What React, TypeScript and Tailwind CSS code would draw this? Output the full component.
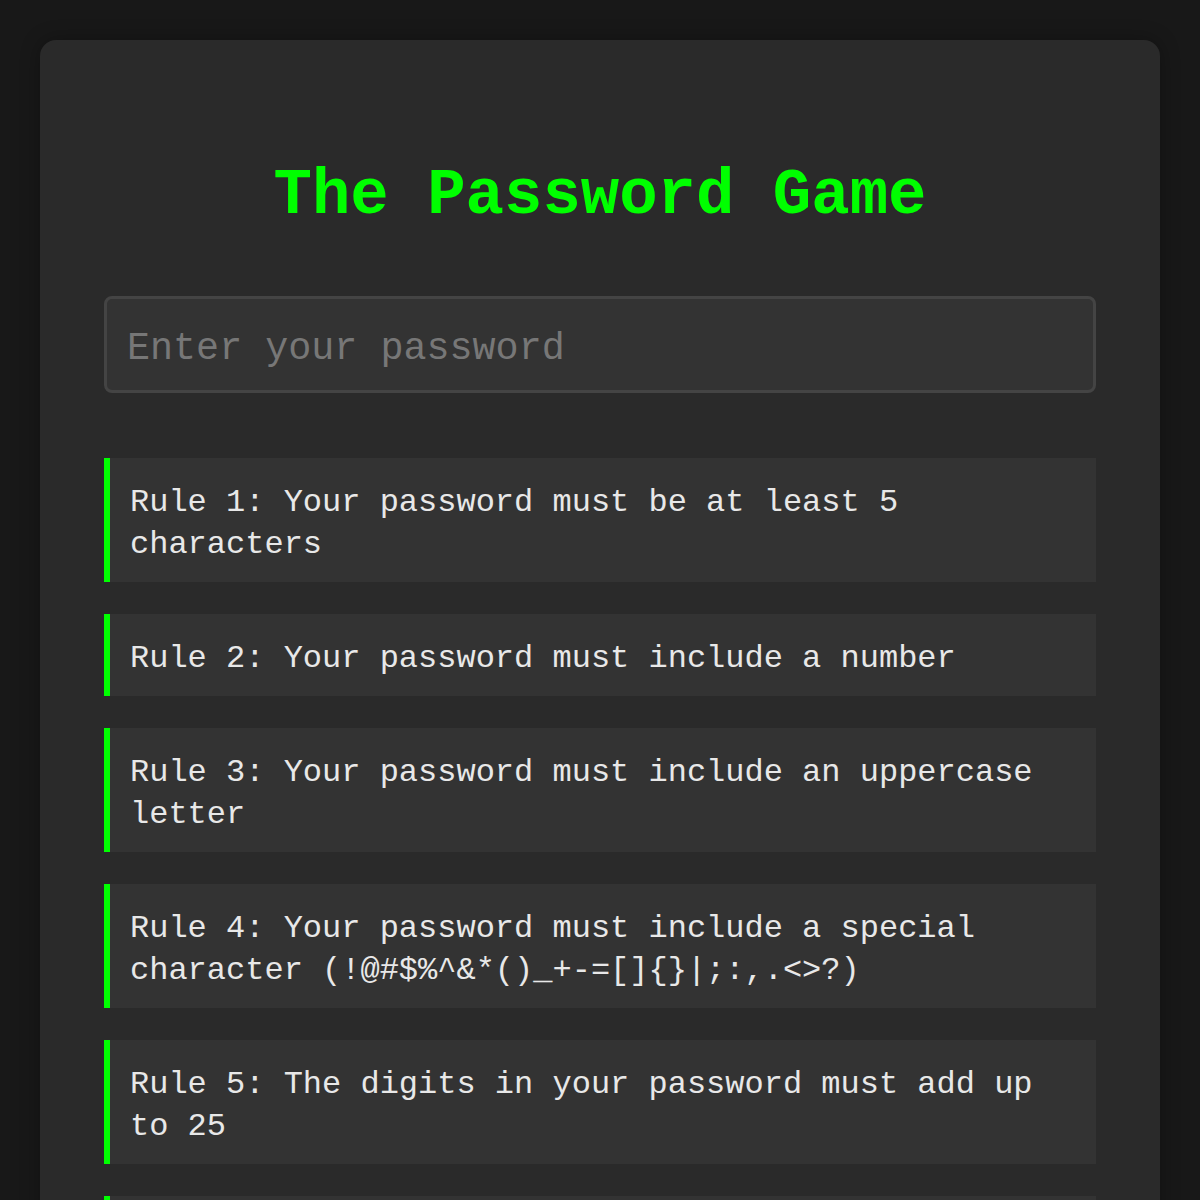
const rules = [
  "Rule 1: Your password must be at least 5 characters",
  "Rule 2: Your password must include a number",
  "Rule 3: Your password must include an uppercase letter",
  "Rule 4: Your password must include a special character (!@#$%^&*()_+-=[]{}|;:,.<>?)",
  "Rule 5: The digits in your password must add up to 25",
  "Rule 6: Your password must include a month of the year",
];

export default function App() {
  return (
    <div className="min-h-screen bg-[#181818] p-10 font-['Liberation_Mono','DejaVu_Sans_Mono',monospace]">
      {/* CARD */}

      <div className="rounded-2xl bg-[#2a2a2a] px-16 pt-[108px] pb-16 shadow-[0_0_20px_rgba(0,0,0,0.3)]">
        <h1 className="text-center text-[64px] font-bold leading-[96px] text-[#00ff00]">
          The Password Game
        </h1>

        <input
          type="text"
          placeholder="Enter your password"
          className="mt-[52px] block h-[97px] w-full rounded-lg border-[3px] border-[#444] bg-[#333] px-5 pt-2 text-[38.4px] text-[#e8e8e8] placeholder:text-[#777] outline-none"
        />

        {/* RULES */}

        <div className="mt-[65px] flex flex-col gap-8">
          {rules.map((rule) => (
            <div
              key={rule}
              className="border-l-[6px] border-[#00ff00] bg-[#333] px-5 pt-6 pb-4 text-[32px] leading-[42px] text-[#e8e8e8]"
            >
              {rule}
            </div>
          ))}
        </div>
      </div>
    </div>
  );
}
